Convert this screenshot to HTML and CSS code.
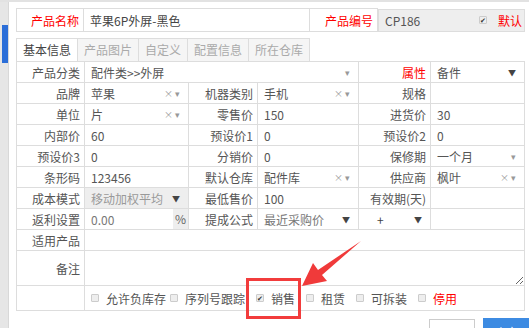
FILE: index.html
```html
<!DOCTYPE html>
<html lang="zh">
<head>
    <meta charset="UTF-8">
    <title>产品编辑</title>
<link rel="stylesheet" href="styles.css">
</head>
<body>
    <div id="page">
        <div id="sidebar"><div class="sidebar-active"></div></div>

        <div id="dialog">
            <table class="name-row">
                <colgroup>
                    <col style="width:67px"><col style="width:226px"><col style="width:68px"><col>
                </colgroup>
                <tr>
                    <td class="label red">产品名称</td>
                    <td class="value dark">苹果6P外屏-黑色</td>
                    <td class="label red">产品编号</td>
                    <td class="value code">
                        <span>CP186</span>
                        <span class="default"><i class="box checked">✔</i><span class="red">默认</span></span>
                    </td>
                </tr>
            </table>

            <div class="tabs">
                <div class="tab active">基本信息</div>
                <div class="tab">产品图片</div>
                <div class="tab">自定义</div>
                <div class="tab">配置信息</div>
                <div class="tab">所在仓库</div>
            </div>

            <table class="form">
                <colgroup>
                    <col style="width:68px"><col style="width:104px"><col style="width:69px">
                    <col style="width:101px"><col style="width:72px"><col>
                </colgroup>
                <tr>
                    <td class="label">产品分类</td>
                    <td class="value" colspan="3"><div class="sel"><span>配件类&gt;&gt;外屏</span><span class="arr">▾</span></div></td>
                    <td class="label red">属性</td>
                    <td class="value"><div class="sel"><span>备件</span><span class="arr dark-arr">▼</span></div></td>
                </tr>
                <tr>
                    <td class="label">品牌</td>
                    <td class="value"><div class="sel"><span>苹果</span><span class="arr">× ▾</span></div></td>
                    <td class="label">机器类别</td>
                    <td class="value"><div class="sel"><span>手机</span><span class="arr">× ▾</span></div></td>
                    <td class="label">规格</td>
                    <td class="value"></td>
                </tr>
                <tr>
                    <td class="label">单位</td>
                    <td class="value"><div class="sel"><span>片</span><span class="arr">× ▾</span></div></td>
                    <td class="label">零售价</td>
                    <td class="value">150</td>
                    <td class="label">进货价</td>
                    <td class="value">30</td>
                </tr>
                <tr>
                    <td class="label">内部价</td>
                    <td class="value">60</td>
                    <td class="label">预设价1</td>
                    <td class="value">0</td>
                    <td class="label">预设价2</td>
                    <td class="value">0</td>
                </tr>
                <tr>
                    <td class="label">预设价3</td>
                    <td class="value">0</td>
                    <td class="label">分销价</td>
                    <td class="value">0</td>
                    <td class="label">保修期</td>
                    <td class="value"><div class="sel"><span>一个月</span><span class="arr">▾</span></div></td>
                </tr>
                <tr>
                    <td class="label">条形码</td>
                    <td class="value">123456</td>
                    <td class="label">默认仓库</td>
                    <td class="value"><div class="sel"><span>配件库</span><span class="arr">× ▾</span></div></td>
                    <td class="label">供应商</td>
                    <td class="value"><div class="sel"><span>枫叶</span><span class="arr">× ▾</span></div></td>
                </tr>
                <tr>
                    <td class="label">成本模式</td>
                    <td class="value disabled"><div class="sel"><span>移动加权平均</span><span class="arr dark-arr">▼</span></div></td>
                    <td class="label">最低售价</td>
                    <td class="value">100</td>
                    <td class="label">有效期(天)</td>
                    <td class="value"></td>
                </tr>
                <tr>
                    <td class="label">返利设置</td>
                    <td class="value addon-cell"><div class="sel"><span class="muted">0.00</span><span class="addon">%</span></div></td>
                    <td class="label">提成公式</td>
                    <td class="value"><div class="sel"><span class="muted">最近采购价</span><span class="arr dark-arr">▼</span></div></td>
                    <td class="value"><div class="sel"><span class="plus">+</span><span class="arr dark-arr">▼</span></div></td>
                    <td class="value"></td>
                </tr>
                <tr>
                    <td class="label">适用产品</td>
                    <td class="value" colspan="5"></td>
                </tr>
                <tr class="memo">
                    <td class="label">备注</td>
                    <td class="value memo-cell" colspan="5"><textarea></textarea></td>
                </tr>
                <tr class="flags">
                    <td class="label"></td>
                    <td class="value" colspan="5">
                        <div class="checks">
                            <span class="check first"><i class="box"></i>允许负库存</span>
                            <span class="check"><i class="box"></i>序列号跟踪</span>
                            <span class="check"><i class="box checked">✔</i>销售</span>
                            <span class="check"><i class="box"></i>租赁</span>
                            <span class="check"><i class="box"></i>可拆装</span>
                            <span class="check red"><i class="box"></i>停用</span>
                        </div>
                    </td>
                </tr>
            </table>

            <div class="buttons">
                <button class="btn">取消</button>
                <button class="btn primary">确定</button>
            </div>
        </div>

        <!-- annotation -->
        <div class="mark-box"></div>
        <svg class="mark-arrow" width="529" height="328" viewBox="0 0 529 328">
            <polygon points="361,239 322,273 327,279 302,284 313,261 318,268" fill="#f03a3a"/>
        </svg>
    </div>
</body>
</html>
```

FILE: styles.css
```css
body {
    margin: 0;
    background: #fff;
    font-family: "Noto Sans CJK SC", "Noto Sans", sans-serif;
    font-size: 12px;
    color: #555;
}

#page {
    position: relative;
    display: flex;
    width: 529px;
    height: 328px;
    overflow: hidden;
    border-top: 2px solid #e2e2e2;
    box-sizing: border-box;
}

#sidebar {
    width: 8px;
    flex: none;
    background: #e6e6e6;
    border-right: 1px solid #d8d8d8;
    padding-top: 23px;
}

.sidebar-active {
    margin-left: 2px;
    width: 6px;
    height: 38px;
    background: #2b6ed8;
}

#dialog {
    flex: 1;
    padding: 6px 4px 0 7px;
}

table {
    width: 100%;
    border-collapse: collapse;
    table-layout: fixed;
}

td {
    border: 1px solid #ddd;
    height: 20px;
    padding: 0 6px;
    white-space: nowrap;
    overflow: hidden;
}

.label {
    text-align: right;
    padding: 0 4px 0 0;
    color: #555;
}

.red {
    color: #f00;
}

.name-row td {
    height: 21px;
}

.dark {
    color: #444;
}

.code {
    background: #eee;
    display: flex;
    justify-content: space-between;
    align-items: center;
    height: 21px;
    padding-right: 2px;
}

.default {
    display: flex;
    align-items: center;
    gap: 4px;
}

.tabs {
    display: flex;
    margin-top: 6px;
    height: 23px;
}

.tab {
    border: 1px solid #ddd;
    border-left: none;
    border-bottom: none;
    background: #f5f5f5;
    color: #aaa;
    padding: 0 6px;
    line-height: 22px;
}

.tab:first-child {
    border-left: 1px solid #ddd;
}

.tab.active {
    background: #fff;
    color: #444;
}

.form .value {
    padding: 0 8px 0 6px;
}

.sel {
    display: flex;
    justify-content: space-between;
    align-items: center;
}

.arr {
    color: #999;
    font-size: 9px;
}

.dark-arr {
    color: #444;
    font-size: 8px;
}

.disabled {
    background: #eee;
    color: #999;
}

.muted {
    color: #777;
}

.plus {
    padding-left: 12px;
    color: #444;
}

.form .addon-cell {
    padding-right: 0;
}

.addon {
    background: #eee;
    width: 15px;
    height: 20px;
    line-height: 20px;
    text-align: center;
    color: #666;
}

.memo td {
    height: 34px;
}

.form .memo-cell {
    padding: 0;
}

.memo-cell textarea {
    display: block;
    width: 100%;
    height: 33px;
    border: none;
    margin: 0;
    resize: vertical;
    box-sizing: border-box;
}

.flags td {
    height: 24px;
}

.checks {
    display: flex;
    align-items: center;
}

.check {
    display: flex;
    align-items: center;
    margin-right: 11px;
}

.check.first {
    margin-right: 4px;
}

.box {
    display: inline-block;
    width: 6px;
    height: 6px;
    border: 1px solid #ccc;
    background: #eee;
    border-radius: 1px;
    margin-right: 7px;
    font-style: normal;
    font-size: 7px;
    line-height: 6px;
    text-align: center;
    color: #333;
}

.buttons {
    display: flex;
    justify-content: flex-end;
    gap: 8px;
    margin-top: 8px;
    margin-right: -4px;
}

.btn {
    font-family: inherit;
    font-size: 12px;
    height: 28px;
    padding: 0 10px;
    background: #fff;
    border: 1px solid #ccc;
    color: #333;
}

.btn.primary {
    width: 46px;
    margin-top: -1px;
    background: #3d8be2;
    border-color: #3d8be2;
    color: #fff;
}

.mark-box {
    position: absolute;
    left: 246px;
    top: 276px;
    width: 49px;
    height: 35px;
    border: 3px solid #f23c3c;
}

.mark-arrow {
    position: absolute;
    left: 0;
    top: 0;
}
```
